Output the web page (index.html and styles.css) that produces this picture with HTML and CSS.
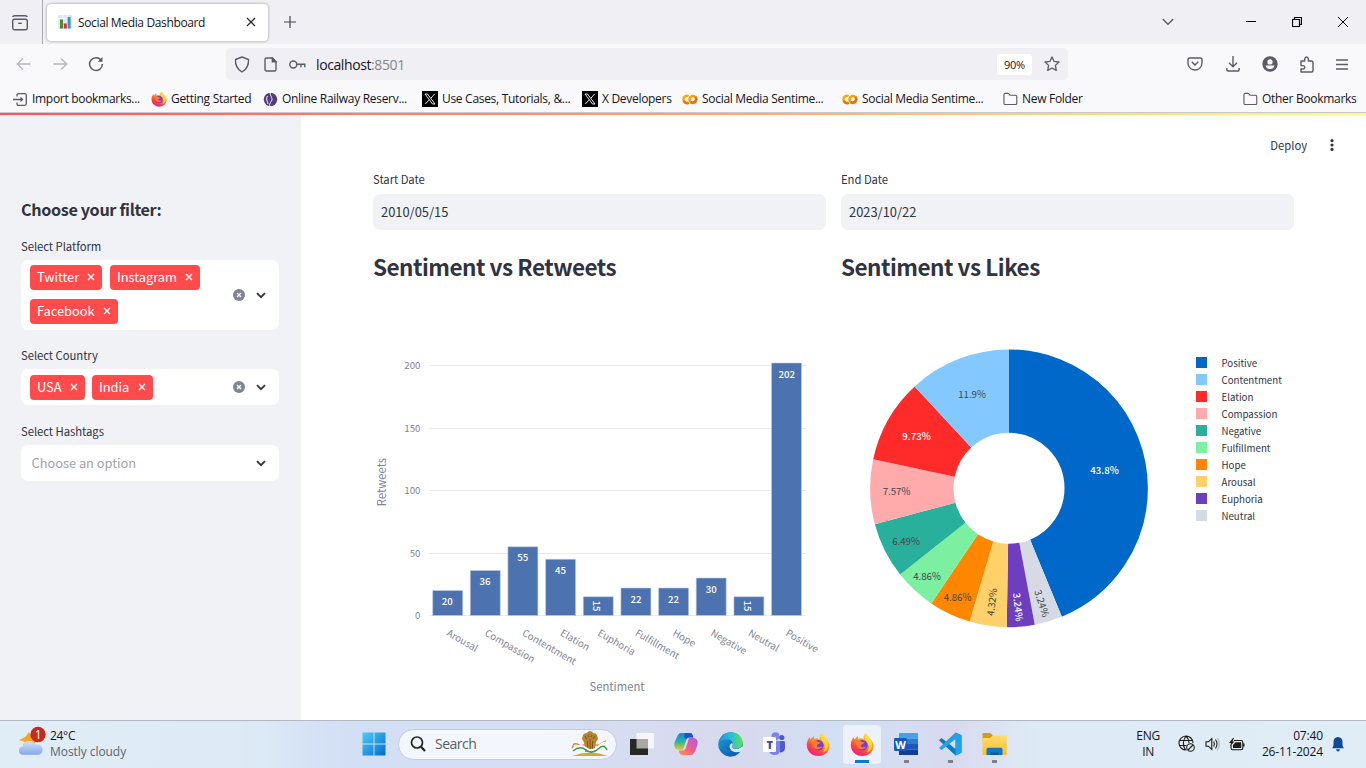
FILE: index.html
```html
<!DOCTYPE html>
<html lang="en">
<head>
<meta charset="utf-8">
<title>Social Media Dashboard</title>
<link rel="stylesheet" href="styles.css">
</head>
<body>
<svg class="defs" width="0" height="0">
  <defs>
    <linearGradient id="ffBody" x1=".8" y1="0" x2=".2" y2="1"><stop offset="0" stop-color="#ffe52b"/><stop offset=".4" stop-color="#ff9520"/><stop offset=".75" stop-color="#ff3750"/><stop offset="1" stop-color="#eb1a87"/></linearGradient>
    <linearGradient id="winTile" gradientUnits="userSpaceOnUse" x1="0" y1="0" x2="24" y2="24"><stop offset="0" stop-color="#4cd0fb"/><stop offset="1" stop-color="#0268cc"/></linearGradient>
    <linearGradient id="cloud" x1="0" y1="0" x2="0" y2="1"><stop offset="0" stop-color="#d3e2fb"/><stop offset="1" stop-color="#84a8e9"/></linearGradient>
    <linearGradient id="edgeTop" x1="0" y1="0" x2="1" y2="0"><stop offset="0" stop-color="#1a8fd8"/><stop offset=".5" stop-color="#2bbcdb"/><stop offset="1" stop-color="#62e254"/></linearGradient>
    <linearGradient id="edgeBottom" x1="0" y1="0" x2="1" y2="1"><stop offset="0" stop-color="#1b9de2"/><stop offset="1" stop-color="#0b4f9f"/></linearGradient>
    <linearGradient id="copA" x1="0" y1="0" x2="0" y2="1"><stop offset="0" stop-color="#1883e8"/><stop offset=".5" stop-color="#28b5a0"/><stop offset="1" stop-color="#f2cb1c"/></linearGradient>
    <linearGradient id="copB" x1="1" y1="0" x2="0" y2="1"><stop offset="0" stop-color="#a45cf0"/><stop offset=".5" stop-color="#ef5a93"/><stop offset="1" stop-color="#fb9a46"/></linearGradient>
    <linearGradient id="folder" x1="0" y1="0" x2="0" y2="1"><stop offset="0" stop-color="#ffdb6b"/><stop offset="1" stop-color="#fbc02b"/></linearGradient>
    <symbol id="firefox" viewBox="0 0 24 24">
      <path d="M16.200.6c.3 2 1.200 3.400 2.600 4.700C21.600 7.300 23.500 9.900 23.500 13.200 23.500 19.200 18.600 23.500 12.300 23.500 5.700 23.500.8 18.700.8 12.500.8 9.200 2 6.300 3.800 4.400L4.300 7 7.800 3.200 8.300 6.600C10.300 5.400 12.100 5.800 13.600 6.800 13 4.300 14.200 2 16.200.6Z" fill="url(#ffBody)"/>
      <path d="M16.200.6C16.700 3 23.500 6.800 22 14c-1 4-3 5-5 6 3-5 2-8-.5-11-2.700-3.200-2.300-6-.3-8.400Z" fill="#ffdd36" opacity=".85"/>
      <circle cx="12.300" cy="12.700" r="5.300" fill="#7b3ad8"/>
      <path d="M5.500 8.500c2.200-1 4.500-.3 6 .8l3 .7c-.4 1.500-2.400 1.400-3.300 2.500-.7 1 .3 2.500 1.800 2.200 1-.2 1.900-.7 3-.1-1 2.200-5.500 3.300-8 .8-2-2-1.400-4.600-2.500-6.900Z" fill="#ff7a28"/>
    </symbol>
    <symbol id="xlogo" viewBox="0 0 16 16"><rect width="16" height="16"/><path d="M3 3h2.500L13 13h-2.500ZM12.600 3 8.800 7.300M7 8.800 3.300 13" fill="none" stroke="#fff" stroke-width=".9"/></symbol>
    <symbol id="colab" viewBox="0 0 17 12"><circle cx="11.700" cy="6" r="3.800" fill="none" stroke="#f5a009" stroke-width="2.700"/><path d="M7 2.300a4 4 0 1 0 0 7.300" fill="none" stroke="#f9ab00" stroke-width="2.700"/><path d="M1.600 7.500A4 4 0 0 0 7.200 9.400M14.500 3.200a4 4 0 0 1-5.400 5.600" fill="none" stroke="#e8710a" stroke-width="2.700"/></symbol>
    <symbol id="folderLine" viewBox="0 0 16 14"><path d="M1 11.500v-9Q1 1 2.500 1H5q1 0 1.700 1l.8 1h5.700Q14.700 3 14.700 4.500v7q0 1.400-1.500 1.400H2.500Q1 12.900 1 11.500Z" fill="none" stroke="#5b5b66" stroke-width="1.200"/></symbol>
    <symbol id="chev" viewBox="0 0 10 7"><path d="m1 1.200 4 4 4-4" fill="none" stroke="#31333f" stroke-width="1.800"/></symbol>
    <symbol id="clear" viewBox="0 0 12 12"><circle cx="6" cy="6" r="6" fill="#808495"/><path d="m4 4 4 4m0-4L4 8" stroke="#fff" stroke-width="1.400"/></symbol>
    <symbol id="times" viewBox="0 0 8 8"><path d="m1 1 6 6m0-6L1 7" stroke="#fff" stroke-width="1.300"/></symbol>
  </defs>
</svg>

<header class="tabs">
  <div class="view"><svg width="18" height="18" viewBox="0 0 18 18" fill="none" stroke="#5b5b66" stroke-width="1.400"><path d="M3.500 1.700h11q1.300 0 1.800 1.400M3.500 1.700Q2 1.700 1.700 3.100"/><rect x="1.700" y="5.200" width="14.600" height="10.600" rx="2"/><path d="M7.200 9.300h3.600"/></svg></div>
  <div class="tab">
    <svg width="14" height="14" viewBox="0 0 14 14"><rect width="14" height="14" rx="1" fill="#dbe7ee"/><path d="M0 3.500h14M0 7h14M0 10.500h14M4.500 0v14M9.500 0v14" stroke="#fff" stroke-width=".7"/><path fill="#4a8f2b" d="M2 4.500h3v9H2z"/><path fill="#dc2a4a" d="M5.800 8.500h3v5h-3z"/><path fill="#338fd0" d="M9.600 2h3v11.500h-3z"/></svg>
    <span class="ui tab-title">Social Media Dashboard</span>
    <svg class="tab-x" width="10" height="10" viewBox="0 0 10 10"><path d="m1 1 8 8m0-8L1 9" stroke="#222" stroke-width="1.100"/></svg>
  </div>
  <svg class="plus" width="12" height="12" viewBox="0 0 12 12"><path d="M6 0v12M0 6h12" stroke="#444450" stroke-width="1.200"/></svg>
  <div class="wincontrols">
    <svg width="12" height="8" viewBox="0 0 12 8"><path d="m.7 1 5.300 5.300L11.300 1" fill="none" stroke="#5b5b66" stroke-width="1.300"/></svg>
    <svg width="10" height="10" viewBox="0 0 10 10"><path d="M0 4.500h10" stroke="#000"/></svg>
    <svg width="10" height="10" viewBox="0 0 10 10"><path d="M.5 2.500h7v7h-7zM2.500 2.500v-2h7v7h-2" fill="none" stroke="#000" stroke-width="1.200"/></svg>
    <svg width="10" height="10" viewBox="0 0 10 10"><path d="m0 0 10 10M10 0 0 10" stroke="#000"/></svg>
  </div>
</header>

<nav class="toolbar">
  <div class="navicons">
    <svg width="16" height="14" viewBox="0 0 16 14" fill="none" stroke="#b7b7be" stroke-width="1.400"><path d="M7 1.500 1.300 7 7 12.500M1.500 7h13.200"/></svg>
    <svg width="16" height="14" viewBox="0 0 16 14" fill="none" stroke="#b7b7be" stroke-width="1.400"><path d="m9 1.500 5.700 5.500L9 12.500M14.500 7H1.300"/></svg>
    <svg width="16" height="16" viewBox="0 0 16 16" fill="none" stroke="#5b5b66" stroke-width="1.500"><path d="M13.500 4.800A6.400 6.400 0 1 0 14.400 8"/><path d="M14.500 1v4.800H9.800Z" fill="#5b5b66" stroke="none"/></svg>
  </div>
  <div class="urlbar">
    <svg width="16" height="17" viewBox="0 0 16 17" fill="none" stroke="#5b5b66" stroke-width="1.400"><path d="M8 1 14.500 3.500Q15 12 8 16 1 12 1.500 3.500Z" stroke-linejoin="round"/></svg>
    <svg width="13" height="15" viewBox="0 0 13 15" fill="none" stroke="#5b5b66" stroke-width="1.400"><path d="M2.500 1h5.800L12 4.800V12.500q0 1.500-1.500 1.500h-8Q1 14 1 12.500v-10Q1 1 2.500 1Z"/><path d="M8.300 1v3.900H12Z" fill="#5b5b66"/></svg>
    <svg width="17" height="9" viewBox="0 0 17 9" fill="none" stroke="#5b5b66" stroke-width="1.400"><circle cx="4.300" cy="4.500" r="3.500"/><path d="M7.800 4.200h8V7.200M12 4.200v3"/></svg>
    <span class="url">localhost<i>:8501</i></span>
    <span class="zoom">90%</span>
    <svg width="16" height="16" viewBox="0 0 16 16" fill="none" stroke="#5b5b66" stroke-width="1.300" stroke-linejoin="round"><path d="m8 .9 2.100 4.500 4.900.6-3.600 3.400.9 5L8 12l-4.300 2.400.9-5L1 6l4.900-.6Z"/></svg>
  </div>
  <div class="actions">
    <svg width="16" height="14" viewBox="0 0 16 14" fill="none" stroke="#5b5b66" stroke-width="1.400"><path d="M2.500 1h11Q15 1 15 2.500V6q0 3.500-2.500 5.500-4.500 3-9 0Q1 9.500 1 6V2.500Q1 1 2.500 1ZM4.700 4.800 8 8l3.300-3.200"/></svg>
    <svg width="14" height="16" viewBox="0 0 14 16" fill="none" stroke="#5b5b66" stroke-width="1.400"><path d="M7 0v10.500M3 6.700l4 4 4-4M.8 12v1.500q0 1.500 1.500 1.500h9.400q1.500 0 1.500-1.500V12"/></svg>
    <svg width="16" height="16" viewBox="0 0 16 16"><circle cx="8" cy="8" r="7.700" fill="#5b5b66"/><circle cx="8" cy="5.900" r="2.600" fill="#f9f9fb"/><path d="M3.500 9.500h9A4.500 4.500 0 0 1 8 13 4.500 4.500 0 0 1 3.500 9.500Z" fill="#f9f9fb"/></svg>
    <svg width="14" height="17" viewBox="0 0 14 17" fill="none" stroke="#5b5b66" stroke-width="1.400"><path d="M1 7.500V5h3.700V3Q5 1 6.500 1T8.400 3v2h3.100Q13 5 13 6.500v8q0 1.500-1.500 1.500H1v-3h2.200q1.600-.2 1.600-1.700T3.200 9.600H1Z" stroke-linejoin="round"/></svg>
    <svg width="12" height="11" viewBox="0 0 12 11"><path d="M0 1h12M0 5.500h12M0 10h12" stroke="#5b5b66" stroke-width="1.300"/></svg>
  </div>
</nav>

<div class="bookmarks ui">
  <a><svg width="15" height="13" viewBox="0 0 15 13" fill="none" stroke="#5b5b66" stroke-width="1.300"><path d="M4 3.500V2.200Q4 .7 5.500.7h6.300q1.500 0 1.500 1.500v8.600q0 1.500-1.500 1.500H5.500Q4 12.300 4 10.800V9.500M0 6.500h9"/><path d="m7.500 3.700 3 2.800-3 2.800Z" fill="#5b5b66" stroke="none"/></svg><span>Import bookmarks...</span></a>
  <a><svg width="16" height="16"><use href="#firefox"/></svg><span>Getting Started</span></a>
  <a><svg width="15" height="15" viewBox="0 0 14 15"><circle cx="7" cy="7.500" r="6.700" fill="#553c80"/><path d="M7.200 0c-2 3 2.500 5.500 1 8.500S5 12 7 15M4 4C2 7 4 9 4.500 12" fill="none" stroke="#f9f9fb" stroke-width="1"/></svg><span>Online Railway Reserv...</span></a>
  <a><svg width="16" height="16"><use href="#xlogo"/></svg><span>Use Cases, Tutorials, &amp;...</span></a>
  <a><svg width="16" height="16"><use href="#xlogo"/></svg><span>X Developers</span></a>
  <a><svg width="16" height="11"><use href="#colab"/></svg><span>Social Media Sentime...</span></a>
  <a><svg width="16" height="11"><use href="#colab"/></svg><span>Social Media Sentime...</span></a>
  <a><svg width="15" height="14"><use href="#folderLine"/></svg><span>New Folder</span></a>
  <a><svg width="15" height="14"><use href="#folderLine"/></svg><span>Other Bookmarks</span></a>
</div>
<div class="decoration"></div>

<div class="app">
  <aside class="sidebar">
    <h3>Choose your filter:</h3>
    <label>Select Platform</label>
    <div class="select tall">
      <div class="tags">
        <span class="tag t1">Twitter<svg width="8" height="8"><use href="#times"/></svg></span>
        <span class="tag t2">Instagram<svg width="8" height="8"><use href="#times"/></svg></span>
        <span class="tag t3">Facebook<svg width="8" height="8"><use href="#times"/></svg></span>
      </div>
      <svg width="12" height="12"><use href="#clear"/></svg><svg class="drop" width="10" height="7"><use href="#chev"/></svg>
    </div>
    <label>Select Country</label>
    <div class="select second">
      <div class="tags">
        <span class="tag t4">USA<svg width="8" height="8"><use href="#times"/></svg></span>
        <span class="tag t5">India<svg width="8" height="8"><use href="#times"/></svg></span>
      </div>
      <svg width="12" height="12"><use href="#clear"/></svg><svg class="drop" width="10" height="7"><use href="#chev"/></svg>
    </div>
    <label>Select Hashtags</label>
    <div class="select"><span class="placeholder">Choose an option</span><svg class="drop" width="10" height="7"><use href="#chev"/></svg></div>
  </aside>
  <main>
    <div class="deploybar"><span>Deploy</span><svg width="4" height="12" viewBox="0 0 4 12" fill="#31333f"><circle cx="2" cy="1.600" r="1.600"/><circle cx="2" cy="6" r="1.600"/><circle cx="2" cy="10.400" r="1.600"/></svg></div>
    <div class="columns">
      <section>
        <label>Start Date</label>
        <div class="date">2010/05/15</div>
        <h2>Sentiment vs Retweets</h2>
        <svg class="chart" width="468" height="420" viewBox="373 300 468 420">
          <path d="M429 365.500h377M429 428.500h377M429 490.500h377M429 553.500h377M429 615.500h377" stroke="#e9eaf2"/>
          <g class="axis" text-anchor="end"><text x="420.500" y="369">200</text><text x="420.500" y="432">150</text><text x="420.500" y="494">100</text><text x="420.500" y="557">50</text><text x="420.500" y="619">0</text></g>
          <g fill="#4c72b0" stroke="#c0cde3" stroke-width=".6">
            <path d="M432.700 615.500v-25h30v25ZM470.300 615.500v-45h30v45ZM507.900 615.500v-68.750h30v68.750ZM545.600 615.500v-56.250h30v56.250ZM583.300 615.500v-18.750h30v18.750ZM620.900 615.500v-27.500h30v27.500ZM658.600 615.500v-27.500h30v27.500ZM696.200 615.500v-37.500h30v37.500ZM733.900 615.500v-18.750h30v18.750ZM771.500 615.500v-252.500h30v252.500Z"/>
          </g>
          <g class="barval"><text x="447.300" y="605">20</text><text x="485" y="585">36</text><text x="522.800" y="561">55</text><text x="560.500" y="574">45</text><text transform="translate(593 606)rotate(90)">15</text><text x="636" y="603">22</text><text x="673.500" y="603">22</text><text x="711.200" y="593">30</text><text transform="translate(744 606)rotate(90)">15</text><text x="786.800" y="378">202</text></g>
          <g class="axis">
            <text transform="translate(446 635)rotate(30)">Arousal</text><text transform="translate(484 635)rotate(30)">Compassion</text><text transform="translate(521.500 635)rotate(30)">Contentment</text><text transform="translate(559.500 635)rotate(30)">Elation</text><text transform="translate(597 635)rotate(30)">Euphoria</text><text transform="translate(634.500 635)rotate(30)">Fulfillment</text><text transform="translate(672 635)rotate(30)">Hope</text><text transform="translate(710 635)rotate(30)">Negative</text><text transform="translate(747.500 635)rotate(30)">Neutral</text><text transform="translate(785 635)rotate(30)">Positive</text>
          </g>
          <g class="axtitle"><text x="617" y="691">Sentiment</text><text transform="translate(386 482)rotate(-90)">Retweets</text></g>
        </svg>
      </section>
      <section>
        <label>End Date</label>
        <div class="date">2023/10/22</div>
        <h2>Sentiment vs Likes</h2>
        <svg class="chart" width="468" height="420" viewBox="841 300 468 420">
          <g class="donut" transform="rotate(-90 1009 488.300)">
            <circle pathLength="185" cx="1009" cy="488.300" r="97.200" stroke="#0068c9" stroke-dasharray="81 104"/>
            <circle pathLength="185" cx="1009" cy="488.300" r="97.200" stroke="#d5dae5" stroke-dasharray="6 179" stroke-dashoffset="-81"/>
            <circle pathLength="185" cx="1009" cy="488.300" r="97.200" stroke="#6d3fc0" stroke-dasharray="6 179" stroke-dashoffset="-87"/>
            <circle pathLength="185" cx="1009" cy="488.300" r="97.200" stroke="#ffd16a" stroke-dasharray="8 177" stroke-dashoffset="-93"/>
            <circle pathLength="185" cx="1009" cy="488.300" r="97.200" stroke="#ff8700" stroke-dasharray="9 176" stroke-dashoffset="-101"/>
            <circle pathLength="185" cx="1009" cy="488.300" r="97.200" stroke="#7defa1" stroke-dasharray="9 176" stroke-dashoffset="-110"/>
            <circle pathLength="185" cx="1009" cy="488.300" r="97.200" stroke="#29b09d" stroke-dasharray="12 173" stroke-dashoffset="-119"/>
            <circle pathLength="185" cx="1009" cy="488.300" r="97.200" stroke="#ffabab" stroke-dasharray="14 171" stroke-dashoffset="-131"/>
            <circle pathLength="185" cx="1009" cy="488.300" r="97.200" stroke="#ff2b2b" stroke-dasharray="18 167" stroke-dashoffset="-145"/>
            <circle pathLength="185" cx="1009" cy="488.300" r="97.200" stroke="#83c9ff" stroke-dasharray="22 163" stroke-dashoffset="-163"/>
          </g>
          <g class="pct"><text class="w" x="1104.500" y="474">43.8%</text><text x="972" y="398">11.9%</text><text class="w" x="916.500" y="440">9.73%</text><text x="896.500" y="495">7.57%</text><text x="906" y="545">6.49%</text><text x="927" y="580">4.86%</text><text x="957.500" y="601">4.86%</text><text transform="translate(995.500 602.500)rotate(-83)">4.32%</text><text class="w" transform="translate(1014.500 607.500)rotate(84)">3.24%</text><text transform="translate(1038.500 604.500)rotate(72)">3.24%</text></g>
          <g>
            <path fill="#0068c9" d="M1196 357h11v11h-11z"/><path fill="#83c9ff" d="M1196 374h11v11h-11z"/><path fill="#ff2b2b" d="M1196 391h11v11h-11z"/><path fill="#ffabab" d="M1196 408h11v11h-11z"/><path fill="#29b09d" d="M1196 425h11v11h-11z"/><path fill="#7defa1" d="M1196 442h11v11h-11z"/><path fill="#ff8700" d="M1196 459h11v11h-11z"/><path fill="#ffd16a" d="M1196 476h11v11h-11z"/><path fill="#6d3fc0" d="M1196 493h11v11h-11z"/><path fill="#d5dae5" d="M1196 510h11v11h-11z"/>
          </g>
          <g class="legend"><text x="1221.500" y="367">Positive</text><text x="1221.500" y="384">Contentment</text><text x="1221.500" y="401">Elation</text><text x="1221.500" y="418">Compassion</text><text x="1221.500" y="435">Negative</text><text x="1221.500" y="452">Fulfillment</text><text x="1221.500" y="469">Hope</text><text x="1221.500" y="486">Arousal</text><text x="1221.500" y="503">Euphoria</text><text x="1221.500" y="520">Neutral</text></g>
        </svg>
      </section>
    </div>
  </main>
</div>

<footer class="taskbar ui">
  <div class="weather">
    <svg width="30" height="32" viewBox="0 0 30 32"><path d="m11 6 2 4 4-1v10H5l2-3-6-2 6-3 1-1Z" fill="#f6a623"/><path d="M4.500 28.800a4.300 4.300 0 0 1 .3-8.500 6.700 6.700 0 0 1 12.500-1.800 5.200 5.200 0 0 1 3.700 10.300Z" fill="url(#cloud)"/><circle cx="20" cy="8.500" r="7.700" fill="#c42b1c"/><text x="20" y="13" text-anchor="middle" fill="#fff" font-size="12">1</text></svg>
    <div><b>24°C</b><span>Mostly cloudy</span></div>
  </div>
  <div class="apps">
    <div class="slot start"><svg width="24" height="24" viewBox="0 0 24 24" fill="url(#winTile)"><path d="M.5.500h11v11H.5zM12.500.500h11v11h-11zM.5 12.500h11v11H.5zM12.500 12.500h11v11h-11z"/></svg></div>
    <div class="search">
      <svg width="16" height="16" viewBox="0 0 16 16" fill="none" stroke="#222" stroke-width="1.700"><circle cx="7" cy="6.500" r="5.500"/><path d="m11 10.700 4 4.300" stroke-width="2.200"/></svg>
      <span>Search</span>
      <svg width="38" height="26" viewBox="0 0 38 26"><path d="M1 25q18-7 36 0Z" fill="#d5a43a"/><path d="M14 21h10v-3H14z" fill="#8a8f96"/><path d="M12 4q1-2 4-2 1-2 3-2t3 2q3 0 4 2l1 4-2 3-1 7H14l-1-7-2-3Z" fill="#b4832f"/><path d="m14 5 2 3m8-3-2 3M17 4l1 2m3-2-1 2M16.500 10v8M19 8v10M21.500 10v8" fill="none" stroke="#74501c" stroke-width=".8"/><path d="M1 17.500 3 13q3-1 5 1t7-1M23 13q4 3 8-1l4-2" fill="none" stroke="#ed7d32" stroke-width="1.500"/><path d="M2 18q7-6 13-1t12-1 9-4" fill="none" stroke="#fff" stroke-width="2"/><path d="M2 20q7-6 13-1t12-1 9 1" fill="none" stroke="#3c9a50" stroke-width="1.400"/></svg>
    </div>
    <div class="slot s1"><svg width="24" height="24" viewBox="0 0 24 24"><path fill="#f6f6f6" d="M6.500 1H24v15.500H6.500z"/><path fill="#272725" d="M0 7h18v16H0z"/><path fill="#a8a8a7" d="M6.500 7H18v9.500H6.500z"/></svg></div>
    <div class="slot"><svg width="24" height="24" viewBox="0 0 24 24"><path d="M7 1h9q2 0 2.500 2l.8 2.500H15Q13 5.500 12.400 7.500L9 18H5Q1 18 .3 14 0 11 2 7L4 3Q5 1 7 1Z" fill="url(#copA)"/><path d="M11 1h5q2 0 2.500 2l.8 2.500H15q-2 0-2.600 2L10 5Z" fill="#1755cf"/><path d="M17 23H8q-2 0-2.500-2l-.8-2.500H9q2 0 2.600-2L15 6h4q4 0 4.700 4 .3 3-1.700 7l-2 4q-1 2-3 2Z" fill="url(#copB)"/></svg></div>
    <div class="slot"><svg width="25" height="25" viewBox="0 0 24 24"><circle cx="12" cy="12" r="11.700" fill="url(#edgeBottom)"/><path d="M.4 11C1.500 4 6.500.3 12.300.3 19 .3 23.700 5 23.700 10c0 4-3 6-6.500 6-2.500 0-4-.8-4-1.700 0-.8 1-1.300 1-3 0-2-2-4-5-4C5 7.300 1 9 .4 11Z" fill="url(#edgeTop)"/><path d="M13.200 14.300c.5 1.200 2 1.900 4.500 1.900 2.600 0 4.500-1 5.800-3l.2 3.500-1.700 2.100c-2.500 1.200-9.500 1-10.700-3.700-.5-2 .3-3.500 1.500-4.100 1.500-.5 1.800 1.200.4 3.300Z" fill="#d9e4f6"/></svg></div>
    <div class="slot"><svg width="22" height="24" viewBox="0 0 22 24"><circle cx="12.500" cy="4.200" r="4" fill="#7b83eb"/><circle cx="18.800" cy="5.500" r="2.600" fill="#5059c9"/><path d="M14 9h6.500Q22 9 22 10.500v5q0 5-5 5Z" fill="#5059c9"/><path d="M6 9h11v8.500q0 5.500-5.500 5.500T6 17.500Z" fill="#7b83eb"/><rect y="5" width="13" height="15" rx="1.200" fill="#fff"/><text x="6.500" y="16.700" text-anchor="middle" font-size="11" font-weight="800" fill="#3f48a8">T</text></svg></div>
    <div class="slot"><svg width="24" height="25"><use href="#firefox"/></svg></div>
    <div class="slot active"><svg width="24" height="25"><use href="#firefox"/></svg></div>
    <div class="slot run"><svg width="24" height="24" viewBox="0 0 24 24"><path fill="#41a5ee" d="M5 1h19v5.500H5z"/><path fill="#2b7cd3" d="M5 6.500h19V12H5z"/><path fill="#185abd" d="M5 12h19v5.500H5z"/><path fill="#103f91" d="M5 17.500h19V23H5z"/><rect y="6" width="13" height="13" rx="1.200" fill="#185abd"/><text x="6.500" y="16.500" text-anchor="middle" font-size="11" font-weight="700" fill="#fff">W</text></svg></div>
    <div class="slot run"><svg width="24" height="24" viewBox="0 0 24 24"><path d="m17.500.500 6 2.800v17.500l-6 2.700L1 8.200 3.500 6l14 11Z" fill="#087bc5"/><path d="m17.500.500 6 2.800v17.500l-6 2.700L18 6.800 3.500 18 1 16Z" fill="#23a2ec"/></svg></div>
    <div class="slot run"><svg width="25" height="23" viewBox="0 0 25 23"><path d="M.5 1q0-1 1-1h7l2.500 2.500V8H.5Z" fill="#d99b16"/><path d="M.5 5H8l2.500-2.500H24q.8 0 .8 1V22H.5Z" fill="url(#folder)"/><path d="M4.500 22v-5.500q0-1.700 1.700-1.700h12.600q1.700 0 1.700 1.700V22Z" fill="#1177c8"/><path d="M8.500 19.500h8V22h-8z" fill="#095a9e"/></svg></div>
  </div>
  <div class="tray">
    <div class="lang">ENG<br>IN</div>
    <svg width="18" height="18" viewBox="0 0 18 18" fill="none" stroke="#1c1c1c" stroke-width="1.100"><path d="M8.500 15A7 7 0 1 1 15 8M1.500 5.500h13M1 10.500h7.500M8 1Q3 8 7.500 15M8 1q3 3 3 7"/><circle cx="12.500" cy="12.500" r="3.800"/><path d="m10 15 5-5"/></svg>
    <svg width="15" height="14" viewBox="0 0 15 14" fill="none" stroke="#1c1c1c" stroke-width="1.100"><path d="M1 4.800h2.500L6.800 1.500v11L3.500 9.200H1ZM8.700 4.500q1.300 2.500 0 5M10.500 2.500q3 4.500 0 9"/><path d="M12.500 1q3.500 6 0 12" stroke="#aab4be"/></svg>
    <svg width="16" height="13" viewBox="0 0 16 13"><path d="M5 2.500h7.200q1.600 0 1.600 1.600V10q0 1.700-1.700 1.700H3.800Q2 11.700 2 10V7" fill="none" stroke="#1c1c1c" stroke-width="1.100"/><path d="M6.500 4.300h5.700V10H4V7Z" fill="#1c1c1c"/><path d="M14 5.500h1.500v3H14zM4 0 0 5h2L1 8.500l4.500-5h-2L5 0Z" fill="#1c1c1c"/></svg>
    <div class="clock">07:40<br>26-11-2024</div>
    <svg width="12" height="15" viewBox="0 0 12 15" fill="#0e4a94"><path d="M6 0Q10.500.3 10.500 5v3.500l1.300 2.700H.2L1.500 8.500V5Q1.500.3 6 0ZM4 12.300h4Q7.500 14.500 6 14.500T4 12.300Z"/></svg>
  </div>
</footer>
</body>
</html>
```
FILE: styles.css
```css
* { box-sizing: border-box; }
body { margin: 0; width: 1366px; height: 768px; overflow: hidden; display: flex; flex-direction: column; background: #fff; color: #31333f; font-family: "Noto Sans CJK SC", "Open Sans", sans-serif; }
svg { display: block; flex: none; }
.defs { position: absolute; }
.ui { font: 12px/16px "Open Sans", "Noto Sans", sans-serif; color: #15141a; letter-spacing: -.3px; white-space: nowrap; }

.tabs { height: 44px; flex: none; display: flex; align-items: center; background: #f0eff4; }
.view { width: 43px; height: 44px; padding: 14px 0 0 11px; border-right: 1px solid #a9a8b0; }
.tab { width: 221px; height: 37px; margin-left: 4px; padding: 0 12px 0 11px; display: flex; align-items: center; background: #fff; border-radius: 4px; box-shadow: 0 0 3px rgba(0,0,0,.4); }
.tab-title { margin: 1px 0 0 6px; letter-spacing: -.36px; }
.tab-x { margin-left: auto; }
.plus { margin-left: 16px; }
.wincontrols { margin-left: auto; display: flex; align-items: center; padding-right: 18px; gap: 36px; }
.wincontrols svg:first-child { margin-right: 36px; }

.toolbar { height: 40px; flex: none; display: flex; align-items: center; background: #f9f9fb; }
.navicons { width: 226px; display: flex; align-items: center; gap: 20px; padding-left: 16px; }
.urlbar { width: 842px; height: 32px; padding: 0 8px; display: flex; align-items: center; background: #f0f0f4; border-radius: 4px; }
.urlbar svg:nth-child(2) { margin-left: 14px; }
.urlbar svg:nth-child(3) { margin-left: 12px; }
.url { margin: 1px 0 0 10px; font: 14px/20px "Open Sans", sans-serif; letter-spacing: -.4px; color: #15141a; }
.url i { font-style: normal; color: #85858c; }
.zoom { margin-left: auto; margin-right: 12px; width: 35px; height: 21px; text-align: center; background: #fff; border-radius: 3px; font: 11px/21px "Open Sans", sans-serif; letter-spacing: -.3px; color: #15141a; }
.actions { margin-left: auto; padding-right: 18px; display: flex; align-items: center; gap: 22px; }
.actions svg:first-child { margin-right: 1px; }

.bookmarks { height: 28px; flex: none; display: grid; grid-template-columns: 138px 112px 159px 160px 100px 160px 161px 1fr 123px; align-items: center; padding: 2px 0 0 13px; background: #f9f9fb; }
.bookmarks a { display: flex; align-items: center; gap: 4px; }
.decoration { height: 3px; flex: none; border-top: 1px solid #c9c9cd; background: linear-gradient(90deg, #ff5353, #ffb86b 62%, #fffd80); }

.app { height: 605px; flex: none; display: flex; }
.sidebar { width: 301px; flex: none; padding: 81px 22px 0 21px; background: #f0f2f6; }
.sidebar h3 { margin: 0 0 14px; font-size: 16.200px; line-height: 27px; font-weight: 600; letter-spacing: -.35px; }
label { display: block; font-size: 11.300px; line-height: 18px; letter-spacing: -.05px; }
.sidebar label { margin-bottom: 5px; position: relative; top: -.5px; }
.select { height: 36px; margin-bottom: 16px; padding: 0 13px 0 9px; display: flex; align-items: center; background: #fff; border-radius: 7px; }
.select.tall { height: 70px; }
.select.tall .tags { margin-bottom: 2px; }
.select.second { margin-bottom: 17px; }
.tags { width: 184px; margin-right: 19px; display: flex; flex-wrap: wrap; gap: 9px 8px; }
.tag { height: 25px; padding: 0 7px; display: flex; align-items: center; justify-content: space-between; background: #ff4b4b; color: #fff; border-radius: 4px; font-size: 12.900px; line-height: 24px; letter-spacing: -.05px; }
.t1 { width: 72px; } .t2 { width: 90px; } .t3 { width: 88px; } .t4 { width: 55px; margin-right: -1px; } .t5 { width: 61px; }
.drop { margin-left: auto; }
.placeholder { margin: -1px 0 0 1.500px; font-size: 12.900px; color: #a3a4ac; letter-spacing: -.05px; }

main { flex: 1; }
.deploybar { height: 60px; display: flex; align-items: center; justify-content: flex-end; gap: 23px; padding-right: 32px; font-size: 11.300px; }
.deploybar span { letter-spacing: -.05px; }
.columns { display: grid; grid-template-columns: 453px 453px; gap: 15px; margin: -5px 0 0 72px; }
.date { height: 36px; margin-top: 6px; padding-left: 8px; background: #f0f2f6; border-radius: 7px; font-size: 12.900px; line-height: 36px; }
h2 { margin: 18px 0 0; font-size: 22.500px; line-height: 36px; font-weight: 600; letter-spacing: -.5px; }
.chart { margin-top: 16px; font-size: 9.700px; }
.axis { fill: #808495; }
.barval { fill: #fff; text-anchor: middle; font-weight: 500; }
.axtitle { fill: #808495; font-size: 11.300px; text-anchor: middle; }
.donut circle { fill: none; stroke-width: 83.400; }
.pct { fill: #444; text-anchor: middle; }
.pct .w { fill: #fff; font-weight: 500; }
.legend { fill: #31333f; }

.taskbar { height: 48px; flex: none; display: flex; align-items: center; padding-bottom: 1px; border-top: 1px solid #b1b9c5; background: linear-gradient(90deg, #e0edf6 0, #deebf6 240px, #d2dff5 345px, #d5dff3 550px, #d8d9ed 730px, #d2e0f4 850px, #d8daee 950px, #deebf6 1040px, #e0edf6); }
.weather { width: 350px; padding-left: 18px; display: flex; align-items: center; gap: 2px; }
.weather svg { margin-top: -4px; }
.weather div { display: grid; }
.weather b { font-weight: 400; }
.weather span { color: #5c646c; letter-spacing: -.06px; }
.apps { display: flex; align-items: center; }
.slot { width: 44px; height: 46px; display: grid; place-items: center; }
.start { width: 48px; padding-right: 1px; }
.search { width: 219px; height: 31px; margin-right: 3px; padding: 0 7px 0 11px; display: flex; align-items: center; background: #f3f6fd; border: 1px solid #c5cddd; border-radius: 16px; }
.search span { margin-left: 9px; font-size: 14px; color: #5b5d64; letter-spacing: -.5px; }
.search svg:last-child { margin-left: auto; }
.active { width: 38px; height: 39px; margin: 0 3px; border-radius: 4px; background: linear-gradient(#0a78d4, #0a78d4) 50% 35px / 14px 3px no-repeat #ecf1fb; }
.run { background: radial-gradient(#7b808b, #7b808b) 50% 39px / 5px 3px no-repeat; }
.tray { flex: 1; display: flex; align-items: center; justify-content: flex-end; padding-right: 22px; }
.lang { text-align: center; margin-right: 18px; }
.tray svg { margin-right: 9px; }
.tray svg:last-child { margin: 0; }
.clock { margin: 0 9px 0 8px; text-align: right; letter-spacing: -.15px; }
```
